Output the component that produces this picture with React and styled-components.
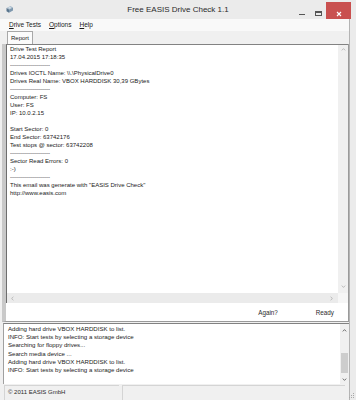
import React from 'react';
import styled, { createGlobalStyle } from 'styled-components';

const GlobalStyle = createGlobalStyle`
  html, body {
    margin: 0;
    padding: 0;
    background: #ebebeb;
  }
  body {
    font-family: "Liberation Sans", Arial, sans-serif;
  }
`;

const reportLines = [
  'Drive Test Report',
  '17.04.2015 17:18:35',
  '--------------------',
  'Drives IOCTL Name: \\\\.\\PhysicalDrive0',
  'Drives Real Name: VBOX HARDDISK 30,39 GBytes',
  '--------------------',
  'Computer: FS',
  'User: FS',
  'IP: 10.0.2.15',
  '\u00a0',
  'Start Sector: 0',
  'End Sector: 63742176',
  'Test stops @ sector: 63742208',
  '--------------------',
  'Sector Read Errors: 0',
  ':-)',
  '--------------------',
  'This email was generate with "EASIS Drive Check"',
  'http://www.easis.com',
];

const logLines = [
  'Adding hard drive VBOX HARDDISK to list.',
  'INFO: Start tests by selecting a storage device',
  'Searching for floppy drives...',
  'Search media device ...',
  'Adding hard drive VBOX HARDDISK to list.',
  'INFO: Start tests by selecting a storage device',
];

const Window = styled.div`
  width: 356px;
  height: 400px;
  display: flex;
  flex-direction: column;
  background: #ebebeb;
  color: #1a1a1a;
  overflow: hidden;
`;

const TitleBar = styled.div`
  height: 19px;
  flex: none;
  display: grid;
  grid-template-columns: 1fr auto 1fr;
  align-items: center;
`;

const AppIcon = styled.svg`
  margin-left: 5px;
  display: block;
`;

const Title = styled.div`
  font-size: 8px;
  color: #2a2a2a;
  line-height: 19px;
`;

const Controls = styled.div`
  justify-self: end;
  display: flex;
  height: 19px;
  margin-right: 5px;
`;

const ControlButton = styled.div`
  width: ${p => p.$w}px;
  height: ${p => (p.$close ? 17 : 19)}px;
  margin-top: ${p => (p.$close ? 2 : 0)}px;
  display: flex;
  align-items: flex-end;
  justify-content: center;
  padding-bottom: 2px;
  box-sizing: border-box;
  background: ${p => (p.$close ? '#c9504f' : 'transparent')};
`;

const MinGlyph = styled.div`
  width: 6px;
  height: 1px;
  background: #555;
  margin-bottom: 2px;
`;

const MaxGlyph = styled.div`
  width: 7px;
  height: 5px;
  border: 1px solid #555;
  border-top-width: 2px;
  box-sizing: border-box;
  margin-bottom: 1px;
`;

const Body = styled.div`
  flex: 1;
  display: flex;
  padding-right: 6px;
`;

const Client = styled.div`
  flex: 1;
  display: flex;
  flex-direction: column;
  background: #f0f0f0;
  border-right: 1px solid #b4b4b4;
`;

const MenuBar = styled.div`
  height: 12px;
  flex: none;
  display: flex;
  gap: 8px;
  padding-left: 9px;
  background: #f9f9f9;
  font-size: 6.5px;
  line-height: 12px;
`;

const MenuItem = styled.div`
  u {
    text-decoration: underline;
    text-underline-offset: 1px;
  }
`;

const TabStrip = styled.div`
  height: 13px;
  flex: none;
  display: flex;
  padding-left: 7px;
`;

const Tab = styled.div`
  height: 13px;
  box-sizing: border-box;
  padding: 0 3px;
  border: 1px solid #a8a8a8;
  border-bottom: none;
  background: #fbfbfb;
  font-size: 6px;
  line-height: 12px;
`;

const Panel = styled.div`
  height: 278px;
  flex: none;
  margin-left: 2px;
  display: flex;
  flex-direction: column;
  border-left: 4px solid #c9c9c9;
  border-right: 1px solid #9a9a9a;
  border-bottom: 1px solid #9a9a9a;
  box-sizing: border-box;
  background: #fff;
`;

const ReportBox = styled.div`
  display: flex;
  flex-direction: column;
  border-top: 1px solid #828282;
  border-left: 1px solid #6e6e6e;
`;

const ScrollArea = styled.div`
  height: 248px;
  display: flex;
`;

const TextArea = styled.div`
  flex: 1;
  padding: 0 3px;
  font-size: 6px;
  line-height: 8px;
  white-space: pre;
  overflow: hidden;
`;

const VScroll = styled.div`
  width: ${p => p.$w}px;
  flex: none;
  display: flex;
  flex-direction: column;
  align-items: center;
  background: #f0f0f0;
  padding: ${p => p.$pad};
  box-sizing: border-box;
`;

const HScrollRow = styled.div`
  height: 10px;
  display: flex;
`;

const HScroll = styled.div`
  flex: 1;
  display: flex;
  align-items: center;
  justify-content: space-between;
  padding: 0 4px 0 3px;
  background: #ebebeb;
`;

const Corner = styled.div`
  width: 10px;
  background: #f6f6f6;
`;

const Spacer = styled.div`
  flex: 1;
`;

const Thumb = styled.div`
  width: 7px;
  height: 20px;
  background: #cdcdcd;
  margin: auto 0 4px;
`;

const Footer = styled.div`
  flex: 1;
  display: flex;
  justify-content: flex-end;
  align-items: center;
  gap: 38px;
  padding-right: 14px;
  font-size: 6.3px;
  color: #2a2a2a;
`;

const LogBox = styled.div`
  height: 61px;
  flex: none;
  margin: 1px 0 1px 3px;
  display: flex;
  border-top: 1px solid #828282;
  border-left: 1px solid #a0a0a0;
  box-sizing: border-box;
  background: #fff;
`;

const LogText = styled.div`
  flex: 1;
  padding: 1px 4px 0;
  font-size: 6.1px;
  line-height: 8.2px;
  white-space: pre;
  overflow: hidden;
`;

const StatusBar = styled.div`
  flex: 1;
  display: flex;
  gap: 3px;
  padding: 0 0 0 4px;
`;

const StatusPanel = styled.div`
  width: ${p => (p.$w ? `${p.$w}px` : 'auto')};
  flex: ${p => (p.$w ? 'none' : '1')};
  box-sizing: border-box;
  border-top: 1px solid #d4d4d4;
  border-left: 1px solid #d4d4d4;
  padding-left: 3px;
  font-size: 6px;
  line-height: 13px;
  color: #2a2a2a;
`;

const Grip = styled.svg`
  align-self: flex-end;
  margin: 0 -6px 1px 0;
  display: block;
`;

const rotations = { up: 0, right: 90, down: 180, left: 270 };

const Arrow = ({ dir, color }) => (
  <svg width="5" height="5" viewBox="0 0 5 5" style={{ transform: `rotate(${rotations[dir]}deg)` }}>
    <path d="M0.8 3.4 L2.5 1.6 L4.2 3.4" fill="none" stroke={color} strokeWidth="0.9" />
  </svg>
);

const Icon = () => (
  <AppIcon width="9" height="9" viewBox="0 0 9 9">
    <path d="M1.5 3 L5.5 1 L8 2.5 L4 4.6 Z" fill="#a9bccd" />
    <path d="M1.5 3 L4 4.6 L4 7.8 L1.5 6.2 Z" fill="#58748c" />
    <path d="M4 4.6 L8 2.5 L8 5.6 L4 7.8 Z" fill="#7d97ad" />
    <ellipse cx="4.7" cy="2.8" rx="1.4" ry="0.6" fill="#e4ecf2" />
  </AppIcon>
);

const CloseGlyph = () => (
  <svg width="6" height="6" viewBox="0 0 6 6">
    <path d="M1 1 L5 5 M5 1 L1 5" stroke="#fff" strokeWidth="1.1" />
  </svg>
);

export default function App() {
  return (
    <Window>
      <GlobalStyle />
      <TitleBar>
        <Icon />
        <Title>Free EASIS Drive Check 1.1</Title>
        <Controls>
          <ControlButton $w={16}><MinGlyph /></ControlButton>
          <ControlButton $w={16}><MaxGlyph /></ControlButton>
          <ControlButton $w={25} $close><CloseGlyph /></ControlButton>
        </Controls>
      </TitleBar>
      <Body>
        <Client>
          <MenuBar>
            <MenuItem><u>D</u>rive Tests</MenuItem>
            <MenuItem><u>O</u>ptions</MenuItem>
            <MenuItem><u>H</u>elp</MenuItem>
          </MenuBar>
          <TabStrip>
            <Tab>Report</Tab>
          </TabStrip>
          <Panel>
            <ReportBox>
              <ScrollArea>
                <TextArea>{reportLines.join('\n')}</TextArea>
                <VScroll $w={10} $pad="2px 0 4px">
                  <Arrow dir="up" color="#b4b4b4" />
                  <Spacer />
                  <Arrow dir="down" color="#b4b4b4" />
                </VScroll>
              </ScrollArea>
              <HScrollRow>
                <HScroll>
                  <Arrow dir="left" color="#b4b4b4" />
                  <Arrow dir="right" color="#b4b4b4" />
                </HScroll>
                <Corner />
              </HScrollRow>
            </ReportBox>
            <Footer>
              <span>Again?</span>
              <span>Ready</span>
            </Footer>
          </Panel>
          <LogBox>
            <LogText>{logLines.join('\n')}</LogText>
            <VScroll $w={9} $pad="4px 0 2px">
              <Arrow dir="up" color="#606060" />
              <Thumb />
              <Arrow dir="down" color="#606060" />
            </VScroll>
          </LogBox>
          <StatusBar>
            <StatusPanel $w={115}>© 2011 EASIS GmbH</StatusPanel>
            <StatusPanel />
            <Grip width="7" height="7" viewBox="0 0 7 7">
              <g fill="#a8a8a8">
                <rect x="5" y="1" width="1" height="1" />
                <rect x="3" y="3" width="1" height="1" />
                <rect x="5" y="3" width="1" height="1" />
                <rect x="1" y="5" width="1" height="1" />
                <rect x="3" y="5" width="1" height="1" />
                <rect x="5" y="5" width="1" height="1" />
              </g>
            </Grip>
          </StatusBar>
        </Client>
      </Body>
    </Window>
  );
}
